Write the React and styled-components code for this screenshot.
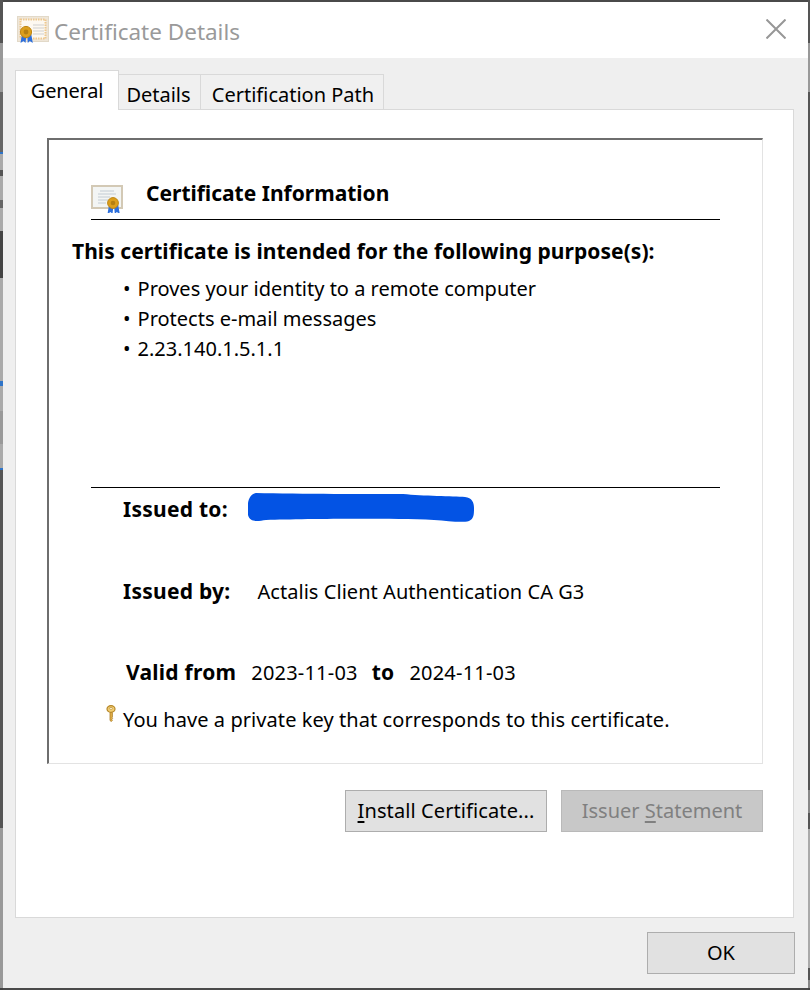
import React from "react";
import styled, { createGlobalStyle } from "styled-components";

const Global = createGlobalStyle`
  html, body {
    margin: 0;
    padding: 0;
  }
  body {
    font-family: "Noto Sans", "Open Sans", sans-serif;
    color: #000;
  }
`;

// the desktop behind the dialog only shows as a thin strip on each side
const Desktop = styled.div`
  width: 810px;
  height: 990px;
  box-sizing: border-box;
  padding: 2px 2px 2px 3px;
  overflow: hidden;
  background:
    linear-gradient(
      to bottom,
      #555 0 43px,
      #999 43px 92px,
      #666 92px 152px,
      #2f74c8 152px 154px,
      #aaa 154px 170px,
      #555 170px 176px,
      #aaa 176px 200px,
      #666 200px 208px,
      #aaa 208px 231px,
      #444 231px 278px,
      #aaa 278px 381px,
      #2f74c8 381px 386px,
      #aaa 386px 411px,
      #999 411px 444px,
      #aaa 444px 468px,
      #2f74c8 468px 470px,
      #555 470px 828px,
      #999 828px 988px,
      #444 988px
    ) left / 3px 100% no-repeat,
    linear-gradient(
      to bottom,
      #555 0 43px,
      #999 43px 92px,
      #555 92px 790px,
      #888 790px 813px,
      #555 813px 829px,
      #aaa 829px 968px,
      #555 968px 980px,
      #888 980px 988px,
      #444 988px
    ) right / 2px 100% no-repeat,
    #4a4a4a;
`;

const Dialog = styled.div`
  height: 100%;
  display: flex;
  flex-direction: column;
  background: #efefef;
`;

const TitleBar = styled.div`
  height: 56px;
  flex: none;
  display: flex;
  align-items: center;
  background: #fff;
  padding: 0 22px 0 14px;
`;

const TitleText = styled.div`
  margin: 2px 0 0 5px;
  font-size: 22.5px;
  color: #9a9a9a;
`;

const CloseIcon = styled.svg`
  margin: -3px 0 0 auto;
  width: 20px;
  height: 20px;
  stroke: #979797;
  stroke-width: 2;
  fill: none;
`;

const Body = styled.div`
  flex: 1;
  display: flex;
  flex-direction: column;
  padding: 13px 12px 14px 12px;
`;

const Tabs = styled.div`
  height: 39px;
  flex: none;
  display: flex;
  align-items: flex-end;
  position: relative;
  z-index: 1;
  margin-bottom: -1px;
`;

const Tab = styled.div`
  box-sizing: border-box;
  width: ${(p) => p.$width}px;
  height: ${(p) => (p.$active ? 40 : 36)}px;
  display: flex;
  justify-content: center;
  align-items: center;
  padding-top: ${(p) => (p.$active ? 0 : 4)}px;
  padding-left: ${(p) => p.$nudge || 0}px;
  padding-right: ${(p) => -(p.$nudge || 0) > 0 ? -p.$nudge : 0}px;
  font-size: 20px;
  letter-spacing: ${(p) => (p.$active ? -0.2 : 0)}px;
  background: ${(p) => (p.$active ? "#fff" : "#f0f0f0")};
  border: 1px solid #d9d9d9;
  border-left-width: ${(p) => (p.$active ? 1 : 0)}px;
  border-bottom: ${(p) => (p.$active ? "none" : "1px solid #d9d9d9")};
`;

const TabPage = styled.div`
  box-sizing: border-box;
  width: 779px;
  height: 809px;
  flex: none;
  padding: 28px 30px 0 31px;
  background: #fff;
  border: 1px solid #d9d9d9;
`;

const InfoBox = styled.div`
  box-sizing: border-box;
  width: 716px;
  height: 626px;
  padding: 0 42px;
  border-top: 2px solid #6e6e6e;
  border-left: 2px solid #6e6e6e;
  border-right: 1px solid #e3e3e3;
  border-bottom: 1px solid #e3e3e3;
`;

const InfoHeader = styled.div`
  height: 80px;
  box-sizing: border-box;
  display: flex;
  align-items: flex-end;
  padding-bottom: 6px;
  border-bottom: 1px solid #000;
`;

const InfoTitle = styled.div`
  margin-left: 23px;
  padding-bottom: 6px;
  font-size: 21px;
  font-weight: 700;
`;

const Purpose = styled.div`
  margin: 16px 0 0 -19px;
  font-size: 21px;
  line-height: 30px;
  font-weight: 700;
  letter-spacing: 0.05px;
  white-space: nowrap;
`;

const PurposeList = styled.ul`
  list-style: none;
  margin: 8px 0 0;
  padding: 0 0 0 32px;
  height: 213px;
  border-bottom: 1px solid #000;
`;

const PurposeItem = styled.li`
  display: flex;
  gap: 7px;
  height: 30px;
  font-size: 20px;
  line-height: 30px;
  &::before {
    content: "•";
  }
`;

const FieldRow = styled.div`
  display: flex;
  align-items: center;
  height: 30px;
  margin: ${(p) => p.$top}px 0 0 ${(p) => p.$left}px;
  font-size: 20px;
  letter-spacing: 0.05px;
  white-space: nowrap;
`;

const Label = styled.span`
  font-size: 21px;
  font-weight: 700;
  letter-spacing: 0.25px;
  margin-left: ${(p) => p.$lead || 0}px;
  margin-right: ${(p) => p.$gap}px;
`;

const DateValue = styled.span`
  letter-spacing: 0.2px;
`;

const Redaction = styled.svg`
  width: 226px;
  height: 31px;
  margin-top: -3px;
  fill: #0353e4;
`;

const KeyRow = styled.div`
  display: flex;
  align-items: flex-start;
  margin: 18px 0 0 15px;
  font-size: 20px;
  line-height: 30px;
  letter-spacing: 0.07px;
  white-space: nowrap;
`;

const KeyIcon = styled.svg`
  width: 10px;
  height: 17px;
  margin-right: 7px;
  flex: none;
`;

const Actions = styled.div`
  display: flex;
  justify-content: flex-end;
  gap: 14px;
  margin-top: 26px;
`;

const Button = styled.div`
  box-sizing: border-box;
  width: ${(p) => p.$width}px;
  height: 42px;
  padding-bottom: 2px;
  display: flex;
  justify-content: center;
  align-items: center;
  font-size: 20px;
  letter-spacing: ${(p) => (p.$disabled ? 0 : 0.1)}px;
  background: ${(p) => (p.$disabled ? "#c8c8c8" : "#e1e1e1")};
  color: ${(p) => (p.$disabled ? "#808080" : "#000")};
  border: 1px solid ${(p) => (p.$disabled ? "#b9b9b9" : "#adadad")};
  white-space: pre;
`;

const Mnemonic = styled.span`
  text-decoration: underline;
  text-underline-offset: 3px;
`;

const Footer = styled.div`
  display: flex;
  justify-content: flex-end;
  margin: 14px 1px 0 0;
`;

const IconFrame = styled.svg`
  flex: none;
`;

const Ribbons = ({ x }) => (
  <path
    d={`M${x - 4} ${18}l-1.5 9 3-2 2 2 .8-7zM${x + 1} ${18}l.8 9 2-2 3 2-1.6-9z`}
    fill="#2d6fdc"
  />
);

const TitleCertIcon = () => (
  <IconFrame width="32" height="28" viewBox="0 0 32 28">
    <rect x="0.5" y="0.5" width="31" height="25" fill="#efe6d8" stroke="#e2d9c8" />
    <rect x="3.5" y="3.5" width="25" height="19" fill="#fdf8f0" stroke="#eec88e" strokeWidth="2" strokeDasharray="1.5 1" />
    <path d="M16 9h11M16 12h11M16 15h11M16 18h11" stroke="#cfcfcf" />
    <Ribbons x={9} />
    <circle cx="9" cy="16" r="5.6" fill="#dc9f1c" stroke="#c08612" />
    <circle cx="9" cy="16" r="2.4" fill="#b57f10" />
  </IconFrame>
);

const InfoCertIcon = () => (
  <IconFrame width="32" height="28" viewBox="0 0 32 28">
    <rect x="1" y="1" width="30" height="22" fill="#f3f5f4" stroke="#d3c9b5" strokeWidth="2" />
    <path d="M9 6h14M7 9h18M7 12h12M7 15h10M7 18h8" stroke="#c3ccd4" />
    <g transform="translate(13 2)">
      <Ribbons x={9} />
    </g>
    <circle cx="22" cy="18" r="5.4" fill="#dc9f1c" stroke="#c08612" />
    <circle cx="22" cy="18" r="2.3" fill="#b57f10" />
  </IconFrame>
);

const App = () => (
  <>
    <Global />
    <Desktop>
      <Dialog>
        <TitleBar>
          <TitleCertIcon />
          <TitleText>Certificate Details</TitleText>
          <CloseIcon viewBox="0 0 20 20">
            <path d="M0.5 0.5l19 19M19.5 0.5l-19 19" />
          </CloseIcon>
        </TitleBar>
        <Body>
          <Tabs>
            <Tab $active $width={104}>General</Tab>
            <Tab $width={82} $nudge={-2}>Details</Tab>
            <Tab $width={183} $nudge={2}>Certification Path</Tab>
          </Tabs>
          <TabPage>
            <InfoBox>
              <InfoHeader>
                <InfoCertIcon />
                <InfoTitle>Certificate Information</InfoTitle>
              </InfoHeader>
              <Purpose>This certificate is intended for the following purpose(s):</Purpose>
              <PurposeList>
                <PurposeItem>Proves your identity to a remote computer</PurposeItem>
                <PurposeItem>Protects e-mail messages</PurposeItem>
                <PurposeItem>2.23.140.1.5.1.1</PurposeItem>
              </PurposeList>
              <FieldRow $top={6} $left={32}>
                <Label $gap={20}>Issued to:</Label>
                <Redaction viewBox="0 0 226 31">
                  <path d="M8 1C50 2 125 2 155 2c20 2 50 2 62 3 7 1 9 5 9 11 0 6 0 11-5 13-7 2-20 0-35-1-50-2-130-1-168 0-8 1-16 3-18-5C-1 15-1 3 8 1z" />
                </Redaction>
              </FieldRow>
              <FieldRow $top={52} $left={32}>
                <Label $gap={27}>Issued by:</Label>
                Actalis Client Authentication CA G3
              </FieldRow>
              <FieldRow $top={51} $left={35}>
                <Label $gap={15}>Valid from</Label>
                <DateValue>2023-11-03</DateValue>
                <Label $lead={14} $gap={15}>to</Label>
                <DateValue>2024-11-03</DateValue>
              </FieldRow>
              <KeyRow>
                <KeyIcon viewBox="0 0 10 17">
                  <path d="M4 7.5v8l1.4 1 1-1.2-.6-.8.8-.8-.8-.8.6-.7V7.5z" fill="#e3b04a" stroke="#a97c24" strokeWidth="0.8" />
                  <ellipse cx="5" cy="4" rx="4" ry="3.4" fill="#f2cd72" stroke="#b5872a" strokeWidth="1.2" />
                  <ellipse cx="5" cy="3.4" rx="1.6" ry="1" fill="#fff6d8" stroke="#b5872a" strokeWidth="0.6" />
                </KeyIcon>
                You have a private key that corresponds to this certificate.
              </KeyRow>
            </InfoBox>
            <Actions>
              <Button $width={202}>
                <span><Mnemonic>I</Mnemonic>nstall Certificate...</span>
              </Button>
              <Button $disabled $width={202}>
                <span>Issuer <Mnemonic>S</Mnemonic>tatement</span>
              </Button>
            </Actions>
          </TabPage>
          <Footer>
            <Button $width={148}>OK</Button>
          </Footer>
        </Body>
      </Dialog>
    </Desktop>
  </>
);

export default App;
